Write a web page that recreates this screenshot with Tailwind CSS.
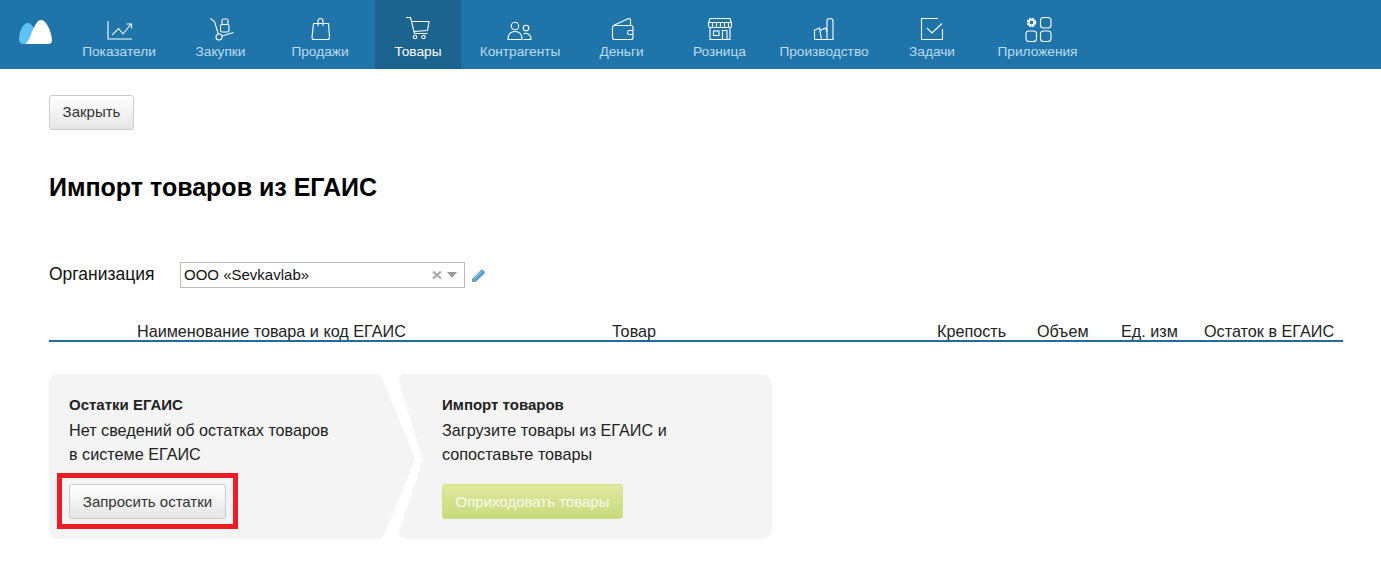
<!DOCTYPE html>
<html lang="ru">
  <head>
    <meta charset="UTF-8" />
    <meta name="viewport" content="width=device-width, initial-scale=1.0" />
    <title>Импорт товаров из ЕГАИС</title>
    <script src="https://cdn.jsdelivr.net/npm/@tailwindcss/browser@4"></script>
  </head>
  <body class="bg-white text-[#222] font-['Liberation_Sans',Arial,sans-serif] overflow-hidden">
    <!-- Top nav -->
    <nav class="flex h-[69px] bg-[#1f74aa] text-[13.7px] leading-[16px] text-[#bcdcf0]">
      <a class="flex w-[62px] shrink-0 pl-[19px] pt-[20px]">
        <svg class="w-[33px] h-[24px]" viewBox="19 20 33 24">
          <path fill="#5ec2f5" d="M19 39C19 32 23 23 27.500 23C30.500 23 33 26 35 30L28 44H23.500C20.500 44 19 42 19 39Z" />
          <path fill="#fff" d="M25.500 44C31 40 34 20 41 20C47 20 52 34 52 40C52 43 50.500 44 47.500 44Z" />
        </svg>
      </a>
      <a class="flex flex-col items-center w-[114px] pt-[14px]">
        <svg class="w-[40px] h-[30px]" viewBox="99 14 40 30" fill="none" stroke="#fff" stroke-width="1.100">
          <path d="M108 21V39H132" />
          <path d="M112 35L118.500 28.500L123 34L131 24" />
          <path d="M126.500 24H131.500V28.500" />
        </svg>
        <span>Показатели</span>
      </a>
      <a class="flex flex-col items-center w-[89px] pt-[14px]">
        <svg class="w-[40px] h-[30px]" viewBox="200 14 40 30" fill="none" stroke="#fff" stroke-width="1.100">
          <path d="M209.500 18.500L213.500 21.500L217.500 34.500" />
          <circle cx="218" cy="37" r="3" />
          <path d="M221 36L232.500 32.500" />
          <rect x="221" y="19" width="6" height="5.500" rx="1.500" />
          <rect x="219.500" y="24.500" width="8.500" height="7.500" rx="1.500" />
        </svg>
        <span>Закупки</span>
      </a>
      <a class="flex flex-col items-center w-[110px] pt-[14px]">
        <svg class="w-[40px] h-[30px]" viewBox="300 14 40 30" fill="none" stroke="#fff" stroke-width="1.100">
          <path d="M313.500 23.500H328.500L329.500 37.500Q329.500 39.500 327.500 39.500H314Q312 39.500 312 37.500Z" />
          <path d="M318 26V21Q318 18.500 320.500 18.500Q323 18.500 323 21V26" />
        </svg>
        <span>Продажи</span>
      </a>
      <a class="flex flex-col items-center w-[86px] pt-[14px] bg-[#1c6390] text-white">
        <svg class="w-[40px] h-[30px]" viewBox="398 14 40 30" fill="none" stroke="#fff" stroke-width="1.100">
          <path d="M406 17.500H410.500L414.500 33.500H427.500" />
          <path d="M411.500 21.500H429L427.500 30.500L413.800 31.500" />
          <circle cx="415" cy="37" r="1.700" />
          <circle cx="423.500" cy="37" r="1.700" />
        </svg>
        <span>Товары</span>
      </a>
      <a class="flex flex-col items-center w-[118px] pt-[14px]">
        <svg class="w-[40px] h-[30px]" viewBox="500 14 40 30" fill="none" stroke="#fff" stroke-width="1.100">
          <circle cx="515" cy="26" r="3.700" />
          <path d="M508 39.500C508 34 511 31.500 515 31.500C519 31.500 522 34 522 39.500Z" />
          <circle cx="526" cy="28" r="2.800" />
          <path d="M523.500 34C526 32.500 531 33.500 531 39.500H523.500" />
        </svg>
        <span>Контрагенты</span>
      </a>
      <a class="flex flex-col items-center w-[85px] pt-[14px]">
        <svg class="w-[40px] h-[30px]" viewBox="602 14 40 30" fill="none" stroke="#fff" stroke-width="1.100">
          <path d="M614.500 25.500H631Q633 25.500 633 27.500V37.500Q633 39.500 631 39.500H614.500Q612.500 39.500 612.500 37.500V27.500Q612.500 25.500 614.500 25.500Z" />
          <path d="M613.500 25.500L628.500 18.500Q630.500 18.500 630.500 20V25.500" />
          <path d="M633 30.500H629Q627.500 30.500 627.500 32.500Q627.500 34.500 629 34.500H633" />
        </svg>
        <span>Деньги</span>
      </a>
      <a class="flex flex-col items-center w-[111px] pt-[14px]">
        <svg class="w-[40px] h-[30px]" viewBox="700 14 40 30" fill="none" stroke="#fff" stroke-width="1.100">
          <path d="M710 18.500H730L731.500 23V26Q731.500 27.500 730 27.500H710Q708.500 27.500 708.500 26V23Z" />
          <path d="M708.500 22.500H731.500M712.500 23V27M716.500 23V27M720.500 23V27M724.500 23V27M728.500 23V27" />
          <path d="M710 27.500V39.500H730V27.500" />
          <rect x="713.500" y="31" width="5.500" height="4.500" />
          <path d="M722.500 39.500V30.500H727V39.500" />
        </svg>
        <span>Розница</span>
      </a>
      <a class="flex flex-col items-center w-[98px] pt-[14px]">
        <svg class="w-[40px] h-[30px]" viewBox="804 14 40 30" fill="none" stroke="#fff" stroke-width="1.100">
          <path d="M814.500 39.500V30L819.500 28L821.500 39.500" />
          <path d="M820 30.500L825.500 28L827 32" />
          <path d="M827 39.500V21Q827 18.500 830 18.500Q833 18.500 833 21V39.500H814.500" />
        </svg>
        <span>Производство</span>
      </a>
      <a class="flex flex-col items-center w-[118px] pt-[14px]">
        <svg class="w-[40px] h-[30px]" viewBox="912 14 40 30" fill="none" stroke="#fff" stroke-width="1.100">
          <path d="M938 18.500H921.500V39.500H942.500V29" />
          <path d="M927 28L932 33L942 23.500" />
        </svg>
        <span>Задачи</span>
      </a>
      <a class="flex flex-col items-center w-[93px] pt-[14px]">
        <svg class="w-[40px] h-[30px]" viewBox="1018 14 40 30" fill="none" stroke="#fff" stroke-width="1.100">
          <circle cx="1031.500" cy="22.500" r="3.500" stroke-width="2.600" stroke-dasharray="1.800 1" />
          <circle cx="1031.500" cy="22.500" r="2.800" stroke-width="1.800" />
          <rect x="1040.500" y="17.500" width="10.500" height="10.500" rx="3" />
          <rect x="1026" y="31" width="10.500" height="10.500" rx="3" />
          <rect x="1040.500" y="31" width="10.500" height="10.500" rx="3" />
        </svg>
        <span>Приложения</span>
      </a>
    </nav>

    <main class="px-[49px] pr-[38px] pt-[26px]">
      <button class="block h-[35px] w-[85px] rounded-[3px] border border-[#ccc] bg-gradient-to-b from-white to-[#e6e6e6] text-[15px] text-[#333]">Закрыть</button>

      <h1 class="mt-[41px] text-[25px] leading-[32px] font-bold text-black">Импорт товаров из ЕГАИС</h1>

      <!-- Organization -->
      <div class="mt-[59px] flex items-center h-[26px]">
        <label class="w-[131px] pb-[2px] text-[17.500px] text-[#111]">Организация</label>
        <div class="flex items-center w-[285px] h-[26px] border border-[#bbb] pl-[3px] text-[15px] text-[#111]">
          <span class="flex-1">ООО «Sevkavlab»</span>
          <svg class="w-[10px] h-[10px] mr-[5px]" viewBox="0 0 10 10" fill="none" stroke="#aaa" stroke-width="2.200">
            <path d="M1 1.500L9 8.500M9 1.500L1 8.500" />
          </svg>
          <span class="w-0 h-0 mr-[7px] border-x-[5.500px] border-x-transparent border-t-[6px] border-t-[#999]"></span>
        </div>
        <svg class="w-[15px] h-[15px] ml-[6px]" viewBox="0 0 15 15">
          <path fill="#5b9ec9" d="M1 11L10 2Q11 1 12 2L13.500 3.500Q14.500 4.500 13.500 5.500L4.500 14H1Z" />
          <path fill="#8a9aa5" d="M1 11L4.500 14H1Z" />
          <path fill="none" stroke="#d7e8f3" stroke-width="0.800" d="M3 10.500L10.500 3.500" />
        </svg>
      </div>

      <!-- Table head -->
      <div class="mt-[33px] flex h-[21px] border-b-2 border-[#1f6ca3] text-[16.200px] leading-[20px] text-[#222] whitespace-nowrap">
        <div class="w-[563px] pl-[88px]">Наименование товара и код ЕГАИС</div>
        <div class="w-[325px]">Товар</div>
        <div class="w-[100px]">Крепость</div>
        <div class="w-[84px]">Объем</div>
        <div class="w-[83px]">Ед. изм</div>
        <div>Остаток в ЕГАИС</div>
      </div>

      <!-- Steps -->
      <div class="mt-[32px] flex">
        <section class="relative w-[366px] h-[165px] pl-[20px] pt-[22px] text-[16.200px] leading-[24px] text-[#222]">
          <svg class="absolute inset-0 -z-10 w-[366px] h-[165px]" viewBox="0 0 366 165">
            <path fill="#f4f4f4" d="M12 0H326Q332 0 334 6L366 85L336 159Q334 165 328 165H12Q0 165 0 153V12Q0 0 12 0Z" />
          </svg>
          <h2 class="text-[15px] leading-[18px] font-bold">Остатки ЕГАИС</h2>
          <p class="mt-[4px]">Нет сведений об остатках товаров<br />в системе ЕГАИС</p>
          <div class="relative mt-[18px] w-[157px]">
            <button class="block w-[157px] h-[35px] rounded-[3px] border border-[#ccc] bg-gradient-to-b from-white to-[#e6e6e6] text-[15px] text-[#333]">Запросить остатки</button>
            <div class="absolute -left-[12px] -right-[12px] -top-[11px] -bottom-[10px] border-[5px] border-[#ed1c24]"></div>
          </div>
        </section>
        <section class="relative -ml-[17px] w-[374px] h-[165px] pl-[44px] pt-[22px] text-[16.200px] leading-[24px] text-[#222]">
          <svg class="absolute inset-0 -z-10 w-[374px] h-[165px]" viewBox="0 0 374 165">
            <path fill="#f4f4f4" d="M8 0H362Q374 0 374 12V153Q374 165 362 165H8Q-1 165 1 157L25 86L1 8Q-1 0 8 0Z" />
          </svg>
          <h2 class="text-[15px] leading-[18px] font-bold">Импорт товаров</h2>
          <p class="mt-[4px]">Загрузите товары из ЕГАИС и<br />сопоставьте товары</p>
          <button class="mt-[18px] block w-[181px] h-[35px] rounded-[3px] border border-[#cfe08a] bg-gradient-to-b from-[#e0e99f] to-[#c8da7c] text-[15px] text-white/85">Оприходовать товары</button>
        </section>
      </div>
    </main>
  </body>
</html>
